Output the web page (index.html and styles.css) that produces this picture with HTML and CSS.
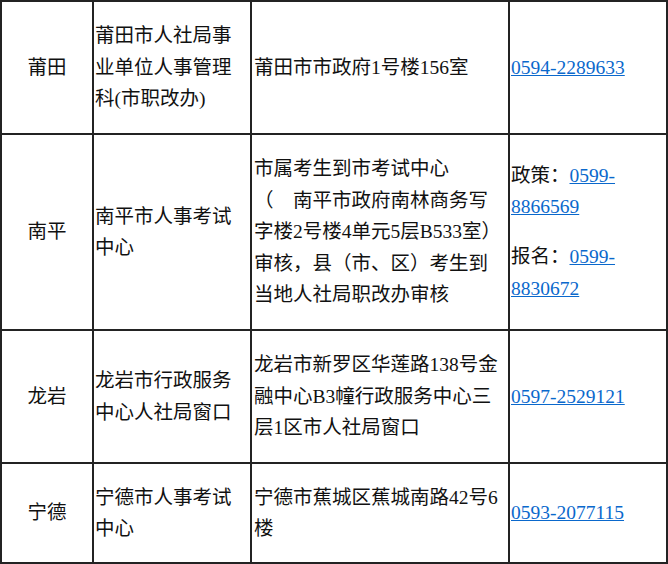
FILE: index.html
```html
<!DOCTYPE html>
<html lang="zh-CN">
<head>
<meta charset="utf-8">
<title>报名点</title>
<link rel="stylesheet" href="styles.css">
</head>
<body>
<table class="sites">
  <colgroup>
    <col class="c-city">
    <col class="c-org">
    <col class="c-addr">
    <col class="c-tel">
  </colgroup>
  <tr class="r-short">
    <td class="city">莆田</td>
    <td class="org">莆田市人社局事业单位人事管理科(市职改办)</td>
    <td class="addr">莆田市市政府1号楼156室</td>
    <td class="tel"><a href="#">0594-2289633</a></td>
  </tr>
  <tr class="r-tall">
    <td class="city">南平</td>
    <td class="org">南平市人事考试中心</td>
    <td class="addr">市属考生到市考试中心<br>（　南平市政府南林商务写<br>字楼2号楼4单元5层B533室）<br>审核，县（市、区）考生到<br>当地人社局职改办审核</td>
    <td class="tel">
      <p class="tel-item">政策：<a href="#">0599-8866569</a></p>
      <p class="tel-item">报名：<a href="#">0599-8830672</a></p>
    </td>
  </tr>
  <tr class="r-short">
    <td class="city">龙岩</td>
    <td class="org">龙岩市行政服务中心人社局窗口</td>
    <td class="addr">龙岩市新罗区华莲路138号金<br>融中心B3幢行政服务中心三<br>层1区市人社局窗口</td>
    <td class="tel"><a href="#">0597-2529121</a></td>
  </tr>
  <tr class="r-last">
    <td class="city">宁德</td>
    <td class="org">宁德市人事考试中心</td>
    <td class="addr">宁德市蕉城区蕉城南路42号6<br>楼</td>
    <td class="tel"><a href="#">0593-2077115</a></td>
  </tr>
</table>
</body>
</html>
```

FILE: styles.css
```css
html, body {
  margin: 0;
  padding: 0;
  background: #fff;
}

.sites {
  width: 668px;
  border-collapse: collapse;
  table-layout: fixed;
  font-family: "Liberation Serif", "Noto Sans CJK SC", serif;
  font-size: 19.5px;
  line-height: 31.5px;
  color: #111;
}

.c-city { width: 92px; }
.c-org { width: 158px; }
.c-addr { width: 258px; }
.c-tel { width: 158px; }

.sites td {
  border: 2px solid #232323;
  padding: 0 1px;
  vertical-align: middle;
  text-align: left;
  word-break: break-all;
}

.r-short td { height: 131px; }
.r-tall td { height: 194px; }
.r-last td { height: 98px; }

.sites td.city {
  text-align: center;
}

.sites td.addr {
  padding-left: 2px;
  white-space: nowrap;
}

.sites a {
  color: #0a68cc;
  text-decoration: underline;
}

.tel-item {
  margin: 0;
  word-break: normal;
}

.tel-item + .tel-item {
  margin-top: 18.5px;
}
```
